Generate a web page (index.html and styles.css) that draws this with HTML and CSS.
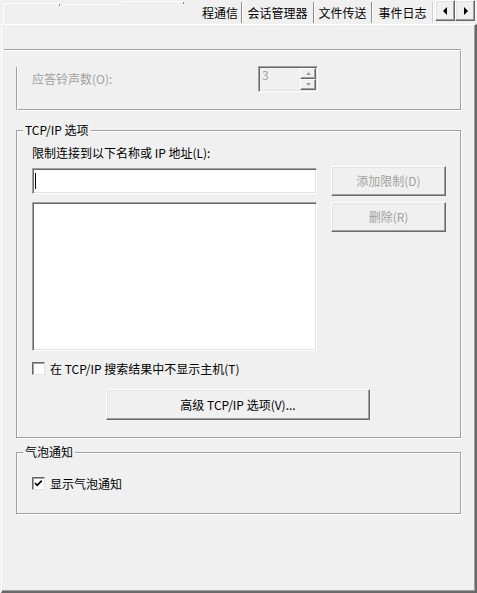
FILE: index.html
```html
<!DOCTYPE html>
<html lang="zh-CN">
<head>
<meta charset="utf-8">
<title>选项</title>
<link rel="stylesheet" href="styles.css">
</head>
<body>
<div class="win">
  <div class="tabstrip">
    <div class="dt dt0"></div>
    <div class="dt dt1"></div>
    <div class="dt dt2"></div>
    <div class="tab tab-a">程通信</div>
    <div class="tab tab-b">会话管理器</div>
    <div class="tab tab-c">文件传送</div>
    <div class="tab tab-d">事件日志</div>
    <div class="arrows">
      <div class="abtn"><svg width="5" height="8" viewBox="0 0 5 8"><polygon points="4,0 4,8 0,4" fill="#000"/></svg></div>
      <div class="abtn"><svg width="5" height="8" viewBox="0 0 5 8"><polygon points="1,0 1,8 5,4" fill="#000"/></svg></div>
    </div>
  </div>
  <div class="panel">
    <div class="topline"></div>
    <div class="g1">
      <div class="row1">
        <span class="lbl1 dis">应答铃声数(O):</span>
        <div class="spin">
          <div class="spin-val">3</div>
          <div class="spin-btns">
            <div class="sb"><svg width="5" height="3" viewBox="0 0 5 3"><polygon points="0,3 5,3 2.5,0" fill="#a0a0a0"/></svg></div>
            <div class="sb"><svg width="5" height="3" viewBox="0 0 5 3"><polygon points="0,0 5,0 2.5,3" fill="#a0a0a0"/></svg></div>
          </div>
        </div>
      </div>
    </div>
    <div class="group g2">
      <div class="legend lg2">TCP/IP 选项</div>
      <div class="lbl2">限制连接到以下名称或 IP 地址(L):</div>
      <div class="cols">
        <div class="leftcol">
          <div class="field"><span class="caret"></span></div>
          <div class="list"></div>
        </div>
        <div class="rightcol">
          <div class="btn dis">添加限制(D)</div>
          <div class="btn dis btn2">删除(R)</div>
        </div>
      </div>
      <div class="chk-row row-a">
        <span class="chk"></span>
        <span class="chk-lbl">在 TCP/IP 搜索结果中不显示主机(T)</span>
      </div>
      <div class="btn big">高级 TCP/IP 选项(V)...</div>
    </div>
    <div class="group g3">
      <div class="legend lg3">气泡通知</div>
      <div class="chk-row">
        <span class="chk"><svg width="11" height="11" viewBox="0 0 11 11"><path d="M2 5 L4.2 7.3 L8.8 2.6" fill="none" stroke="#000" stroke-width="1.7"/></svg></span>
        <span class="chk-lbl">显示气泡通知</span>
      </div>
    </div>
  </div>
</div>
</body>
</html>
```
FILE: styles.css
```css
* { box-sizing: border-box; }
html, body {
  margin: 0;
  padding: 0;
  background: #f0f0f0;
}
body {
  font-family: "Noto Sans CJK SC", "Noto Sans", sans-serif;
  font-size: 12px;
  color: #000;
}
.win {
  width: 477px;
  height: 593px;
  overflow: hidden;
}

/* tab strip */
.tabstrip {
  height: 24px;
  display: flex;
  align-items: flex-start;
}
.dt {
  border-top: 1px solid #fff;
}
.dt0 {
  margin-left: 3px;
  margin-top: 3px;
  width: 57px;
  height: 21px;
  border-left: 1px solid #fff;
  border-right: 1px solid transparent;
  position: relative;
}
.dt0::after, .dt2::after {
  content: "";
  position: absolute;
  right: -1px;
  top: 0;
  width: 1px;
  height: 2px;
  background: #8a8a8a;
}
.dt1 {
  margin-left: 3px;
  margin-top: 4px;
  width: 57px;
  height: 3px;
}
.dt2 {
  margin-left: 1px;
  margin-top: 1px;
  width: 62px;
  height: 3px;
  position: relative;
}
.tab {
  margin-top: 2px;
  height: 21px;
  padding-top: 4px;
  line-height: 14px;
  border-right: 1px solid #8a8a8a;
  box-shadow: 1px 0 0 #fff;
  text-align: center;
  white-space: nowrap;
}
.tab-a { width: 59px; text-align: right; padding-right: 3px; }
.tab-b { width: 72px; }
.tab-c { width: 58px; }
.tab-d {
  width: 62px;
  border-right-color: #fff;
  box-shadow: inset -1px 0 0 #cfcfcf;
}
.arrows {
  margin-left: 1px;
  display: flex;
}
.abtn {
  width: 20px;
  height: 21px;
  display: flex;
  align-items: center;
  justify-content: center;
  border: 1px solid;
  border-color: #fff #696969 #696969 #fff;
  box-shadow: inset -1px -1px 0 #a0a0a0, inset 1px 1px 0 #e3e3e3;
  background: #f0f0f0;
}

/* panel */
.panel {
  margin-left: 1px;
  width: 476px;
  height: 569px;
  border-top: 1px solid #fff;
  border-left: 1px solid #fff;
  border-right: 2px solid #696969;
  border-bottom: 2px solid #696969;
  box-shadow: inset -1px -1px 0 #a0a0a0;
  overflow: hidden;
}
.topline {
  margin-top: 24px;
  margin-left: 2px;
  width: 457px;
  height: 2px;
  border-top: 1px solid #a0a0a0;
  border-bottom: 1px solid #fff;
}
.g1 {
  position: relative;
  margin-left: 14px;
  width: 445px;
  padding: 15px 0 17px 15px;
  border-left: 1px solid transparent;
  border-right: 1px solid #a0a0a0;
  border-bottom: 1px solid #a0a0a0;
  box-shadow: 1px 1px 0 #fff;
}
.g1::before {
  content: "";
  position: absolute;
  left: -1px;
  top: 16px;
  bottom: -1px;
  width: 1px;
  background: #a0a0a0;
  box-shadow: 1px 0 0 #fff;
}
.row1 {
  display: flex;
  align-items: center;
  height: 26px;
}
.lbl1 {
  width: 226px;
  line-height: 14px;
}
.dis { color: #a0a0a0; }
.spin {
  width: 60px;
  height: 26px;
  display: flex;
  border: 1px solid;
  border-color: #a0a0a0 #fff #fff #a0a0a0;
  box-shadow: inset 1px 1px 0 #696969, inset -1px -1px 0 #e3e3e3;
  padding: 1px;
}
.spin-val {
  flex: 1;
  color: #a0a0a0;
  line-height: 12px;
  padding-left: 2px;
  padding-top: 1px;
}
.spin-btns {
  width: 16px;
  display: flex;
  flex-direction: column;
}
.sb {
  height: 12px;
  display: flex;
  align-items: center;
  justify-content: center;
  border: 1px solid;
  border-color: #fff #696969 #696969 #fff;
  box-shadow: inset -1px -1px 0 #a0a0a0;
}

/* group boxes */
.group {
  margin-left: 14px;
  width: 445px;
  border: 1px solid #a0a0a0;
  box-shadow: 1px 1px 0 #fff, inset 1px 1px 0 #fff;
  padding-left: 15px;
}
.legend {
  width: max-content;
  margin-top: -8px;
  margin-left: -9px;
  padding: 0 2px;
  line-height: 14px;
  background: #f0f0f0;
  white-space: nowrap;
}
.lg2 { margin-bottom: 9px; }
.lg3 { margin-bottom: 18px; }
.g2 {
  margin-top: 20px;
  padding-bottom: 17px;
}
.g3 {
  margin-top: 14px;
  padding-bottom: 23px;
}
.lbl2 {
  line-height: 14px;
  white-space: nowrap;
}
.cols {
  margin-top: 6px;
  display: flex;
  gap: 14px;
}
.leftcol {
  width: 285px;
  padding-top: 2px;
}
.field, .list {
  background: #fff;
  border: 1px solid;
  border-color: #a0a0a0 #fff #fff #a0a0a0;
  box-shadow: inset 1px 1px 0 #696969, inset -1px -1px 0 #e3e3e3;
}
.field {
  height: 26px;
  padding: 4px 0 0 2px;
}
.caret {
  display: block;
  width: 1px;
  height: 16px;
  background: #000;
}
.list {
  margin-top: 8px;
  height: 149px;
}
.rightcol {
  width: 115px;
}
.btn {
  height: 30px;
  display: flex;
  align-items: center;
  justify-content: center;
  border: 1px solid;
  border-color: #fff #696969 #696969 #fff;
  box-shadow: inset -1px -1px 0 #a0a0a0, inset 1px 1px 0 #e3e3e3;
  background: #f0f0f0;
  white-space: nowrap;
  line-height: 14px;
}
.btn2 { margin-top: 6px; }
.big {
  margin-top: 14px;
  margin-left: 74px;
  width: 264px;
  height: 31px;
}
.chk-row {
  display: flex;
  align-items: center;
  gap: 5px;
  height: 13px;
}
.row-a { margin-top: 11px; }
.chk {
  width: 13px;
  height: 13px;
  background: #fff;
  border: 1px solid;
  border-color: #696969 #e3e3e3 #e3e3e3 #696969;
  box-shadow: inset 1px 1px 0 #a0a0a0;
  display: flex;
  align-items: center;
  justify-content: center;
}
.chk svg { display: block; }
.chk-lbl {
  line-height: 13px;
  white-space: nowrap;
}
```
